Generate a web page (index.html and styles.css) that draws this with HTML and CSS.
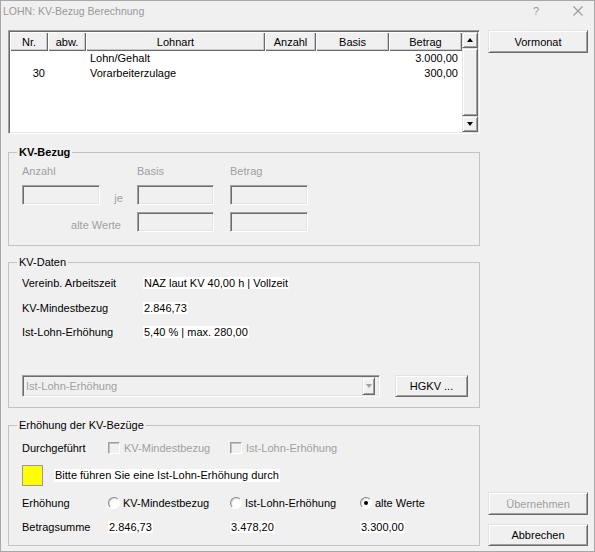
FILE: index.html
```html
<!DOCTYPE html>
<html lang="de">
<head>
    <meta charset="UTF-8">
    <title>LOHN: KV-Bezug Berechnung</title>
    <link rel="stylesheet" href="styles.css">
</head>
<body>
    <div class="window">
        <div class="titlebar">
            <span class="title">LOHN: KV-Bezug Berechnung</span>
            <span class="help">?</span>
            <svg class="close" width="10" height="10" viewBox="0 0 10 10">
                <path d="M0.5 0.5 L9.5 9.5 M9.5 0.5 L0.5 9.5" stroke="#9a9a9a" stroke-width="1.1" fill="none"/>
            </svg>
        </div>

        <div class="content">
            <div class="main">
                <!-- Lohnarten -->
                <div class="listbox">
                    <table class="grid">
                        <colgroup>
                            <col style="width:38px">
                            <col style="width:38px">
                            <col style="width:179px">
                            <col style="width:51px">
                            <col style="width:73px">
                            <col style="width:73px">
                        </colgroup>
                        <thead>
                            <tr>
                                <th>Nr.</th>
                                <th>abw.</th>
                                <th>Lohnart</th>
                                <th>Anzahl</th>
                                <th>Basis</th>
                                <th>Betrag</th>
                            </tr>
                        </thead>
                        <tbody>
                            <tr>
                                <td class="num"></td>
                                <td></td>
                                <td class="text">Lohn/Gehalt</td>
                                <td></td>
                                <td></td>
                                <td class="amount">3.000,00</td>
                            </tr>
                            <tr>
                                <td class="num">30</td>
                                <td></td>
                                <td class="text">Vorarbeiterzulage</td>
                                <td></td>
                                <td></td>
                                <td class="amount">300,00</td>
                            </tr>
                        </tbody>
                    </table>
                    <div class="scrollbar">
                        <div class="sb-btn"><span class="arrow-up"></span></div>
                        <div class="sb-thumb"></div>
                        <div class="sb-btn"><span class="arrow-down"></span></div>
                    </div>
                </div>

                <!-- KV-Bezug -->
                <div class="group group-bezug">
                    <span class="group-title bold">KV-Bezug</span>
                    <div class="bezug-grid">
                        <span class="disabled">Anzahl</span>
                        <span></span>
                        <span class="disabled">Basis</span>
                        <span class="disabled">Betrag</span>

                        <span class="field edit-a"></span>
                        <span class="disabled je">je</span>
                        <span class="field edit-b"></span>
                        <span class="field edit-c"></span>

                        <span class="disabled old-label">alte Werte</span>
                        <span class="field edit-b"></span>
                        <span class="field edit-c"></span>
                    </div>
                </div>

                <!-- KV-Daten -->
                <div class="group group-daten">
                    <span class="group-title">KV-Daten</span>
                    <div class="daten-grid">
                        <span>Vereinb. Arbeitszeit</span>
                        <span><span class="value">NAZ laut KV 40,00 h | Vollzeit</span></span>
                        <span>KV-Mindestbezug</span>
                        <span><span class="value">2.846,73</span></span>
                        <span>Ist-Lohn-Erhöhung</span>
                        <span><span class="value">5,40 % | max. 280,00</span></span>
                    </div>
                    <div class="combo-row">
                        <div class="field combo">
                            <span class="disabled">Ist-Lohn-Erhöhung</span>
                            <span class="combo-btn"><span class="arrow-down light"></span></span>
                        </div>
                        <button class="btn btn-hgkv">HGKV ...</button>
                    </div>
                </div>

                <!-- Erhöhung -->
                <div class="group group-erhoehung">
                    <span class="group-title">Erhöhung der KV-Bezüge</span>
                    <div class="erh-grid">
                        <span>Durchgeführt</span>
                        <span class="opt disabled"><span class="check"></span>KV-Mindestbezug</span>
                        <span class="opt disabled"><span class="check"></span>Ist-Lohn-Erhöhung</span>
                        <span></span>

                        <div class="notice">
                            <span class="swatch"></span>
                            <span class="value">Bitte führen Sie eine Ist-Lohn-Erhöhung durch</span>
                        </div>

                        <span>Erhöhung</span>
                        <span class="opt"><span class="radio"></span>KV-Mindestbezug</span>
                        <span class="opt"><span class="radio"></span>Ist-Lohn-Erhöhung</span>
                        <span class="opt"><span class="radio checked"></span>alte Werte</span>

                        <span>Betragsumme</span>
                        <span><span class="value">2.846,73</span></span>
                        <span><span class="value">3.478,20</span></span>
                        <span><span class="value">3.300,00</span></span>
                    </div>
                </div>
            </div>

            <div class="side">
                <button class="btn">Vormonat</button>
                <div class="side-bottom">
                    <button class="btn btn-accept" disabled>Übernehmen</button>
                    <button class="btn btn-cancel">Abbrechen</button>
                </div>
            </div>
        </div>
    </div>
</body>
</html>
```

FILE: styles.css
```css
* {
    margin: 0;
    padding: 0;
    box-sizing: border-box;
}

body {
    font-family: "Liberation Sans", Arial, sans-serif;
    font-size: 11px;
    color: #000;
    background: #f0f0f0;
}

.window {
    width: 595px;
    height: 552px;
    border: 1px solid #a8a8a8;
    background: #f0f0f0;
    display: flex;
    flex-direction: column;
}

/* Title bar */
.titlebar {
    height: 19px;
    display: flex;
    align-items: center;
    padding: 0 11px 0 2px;
}

.title {
    font-size: 10.5px;
    color: #999;
}

.help {
    margin-left: auto;
    font-size: 11px;
    color: #9a9a9a;
    margin-right: 34px;
}

.close {
    display: block;
}

/* Layout */
.content {
    flex: 1;
    display: flex;
    padding: 10px 6px 5px 7px;
    gap: 8px;
}

.main {
    width: 472px;
    display: flex;
    flex-direction: column;
}

.side {
    width: 100px;
    display: flex;
    flex-direction: column;
}

.side-bottom {
    margin-top: auto;
    display: flex;
    flex-direction: column;
    gap: 9px;
}

/* 3D borders */
.field {
    border: 1px solid;
    border-color: #a0a0a0 #fff #fff #a0a0a0;
    box-shadow: inset 1px 1px #6d6d6d, inset -1px -1px #e3e3e3;
    background: #f0f0f0;
}

.btn {
    font-family: inherit;
    font-size: 11px;
    color: #000;
    background: #f0f0f0;
    border: 1px solid;
    border-color: #e3e3e3 #696969 #696969 #e3e3e3;
    box-shadow: inset 1px 1px #fff, inset -1px -1px #a0a0a0;
    height: 23px;
    width: 100px;
}

.btn:disabled {
    color: #a0a0a0;
}

.btn-cancel {
    height: 22px;
}

.disabled {
    color: #a0a0a0;
}

/* List */
.listbox {
    height: 104px;
    display: flex;
    border: 1px solid;
    border-color: #a0a0a0 #fff #fff #a0a0a0;
    box-shadow: inset 1px 1px #696969, inset -1px -1px #e3e3e3;
    padding: 1px;
    background: #fff;
}

.grid {
    width: 452px;
    table-layout: fixed;
    border-collapse: collapse;
    align-self: flex-start;
    background: #fff;
}

.grid th {
    height: 19px;
    font-weight: normal;
    text-align: center;
    background: #f0f0f0;
    box-shadow: inset 1px 1px #fff, inset -1px -1px #696969, inset -2px -2px #c8c8c8;
}

.grid td {
    height: 14px;
    line-height: 15px;
    padding: 0;
    white-space: nowrap;
}

.grid .num {
    text-align: right;
    padding-right: 3px;
}

.grid .text {
    padding-left: 4px;
}

.grid .amount {
    text-align: right;
    padding-right: 4px;
}

.scrollbar {
    width: 16px;
    display: flex;
    flex-direction: column;
    background: #f0f0f0;
}

.sb-btn,
.sb-thumb,
.combo-btn {
    background: #f0f0f0;
    border: 1px solid;
    border-color: #e3e3e3 #696969 #696969 #e3e3e3;
    box-shadow: inset 1px 1px #fff, inset -1px -1px #a0a0a0;
    display: flex;
    align-items: center;
    justify-content: center;
}

.sb-btn {
    height: 16px;
}

.sb-thumb {
    flex: 1;
}

.arrow-up,
.arrow-down {
    width: 0;
    height: 0;
    border-left: 3.5px solid transparent;
    border-right: 3.5px solid transparent;
}

.arrow-up {
    border-bottom: 4px solid #000;
}

.arrow-down {
    border-top: 4px solid #000;
}

.arrow-down.light {
    border-top-color: #a0a0a0;
}

/* Group boxes */
.group {
    position: relative;
    border: 1px solid #c3c3c3;
}

.group-title {
    position: absolute;
    top: -7px;
    left: 8px;
    padding: 0 2px;
    line-height: 13px;
    background: #f0f0f0;
}

.bold {
    font-weight: bold;
}

.group-bezug {
    margin-top: 18px;
    height: 94px;
    padding: 11px 0 0 13px;
}

.bezug-grid {
    display: grid;
    grid-template-columns: 78px 37px 93px 78px;
    grid-template-rows: 14px 20px 20px;
    row-gap: 7px;
    align-items: center;
}

.bezug-grid .field {
    height: 20px;
}

.edit-a {
    width: 78px;
}

.edit-b {
    width: 77px;
}

.edit-c {
    width: 78px;
}

.bezug-grid .je {
    text-align: center;
    padding-top: 6px;
}

.old-label {
    grid-column: 1 / span 2;
    text-align: right;
    padding-right: 16px;
    padding-top: 5px;
}

.group-daten {
    margin-top: 16px;
    height: 146px;
    padding: 14px 0 10px 13px;
    display: flex;
    flex-direction: column;
}

.daten-grid {
    display: grid;
    grid-template-columns: 121px auto;
    grid-auto-rows: 13px;
    row-gap: 11.5px;
    line-height: 13px;
}

.value {
    background: #fff;
    padding: 0 1px;
    line-height: 13px;
    white-space: nowrap;
}

.combo-row {
    margin-top: auto;
    display: flex;
    align-items: center;
    gap: 15px;
}

.combo {
    width: 358px;
    height: 22px;
    display: flex;
    align-items: center;
    padding: 2px 4px 2px 3px;
}

.combo-btn {
    margin-left: auto;
    width: 13px;
    height: 18px;
}

.btn-hgkv {
    width: 73px;
    height: 22px;
}

.group-erhoehung {
    margin-top: 17px;
    height: 121px;
    padding: 15px 0 0 13px;
}

.erh-grid {
    display: grid;
    grid-template-columns: 86px 122px 130px auto;
    grid-template-rows: 14px 21px 14px 14px;
    row-gap: 10px;
    align-items: center;
    white-space: nowrap;
}

.opt {
    display: flex;
    align-items: center;
}

.check {
    width: 12px;
    height: 12px;
    margin-right: 4px;
    border: 1px solid;
    border-color: #a0a0a0 #fff #fff #a0a0a0;
    box-shadow: inset 1px 1px #c0c0c0;
}

.radio {
    width: 12px;
    height: 12px;
    margin-right: 3px;
    border-radius: 50%;
    border: 1px solid;
    border-color: #8a8a8a #fff #fff #8a8a8a;
    background: #fff;
    box-shadow: inset 1px 1px #dcdcdc;
    position: relative;
}

.radio.checked::after {
    content: "";
    position: absolute;
    left: 3px;
    top: 3px;
    width: 4px;
    height: 4px;
    border-radius: 50%;
    background: #000;
}

.notice {
    grid-column: 1 / -1;
    display: flex;
    align-items: center;
    gap: 11px;
}

.swatch {
    width: 21px;
    height: 21px;
    background: #ffff00;
    border: 1px solid #9a9a9a;
}
```
